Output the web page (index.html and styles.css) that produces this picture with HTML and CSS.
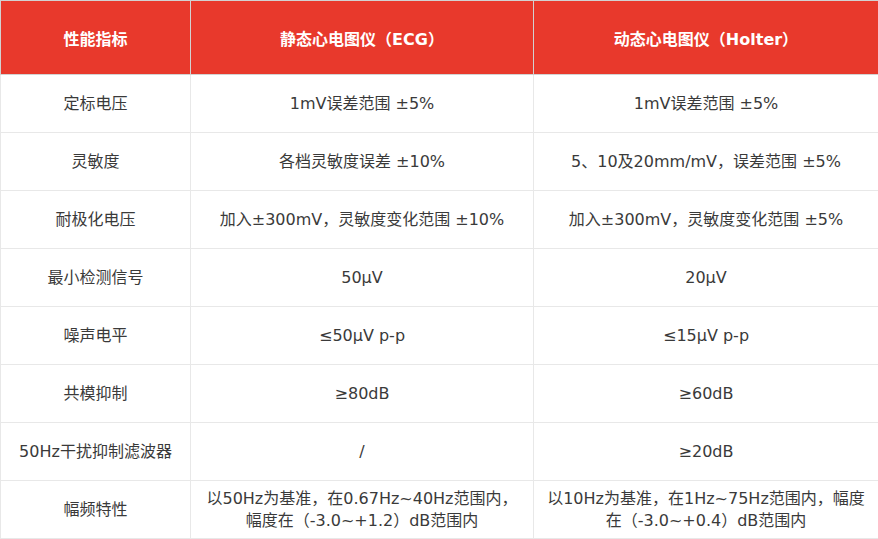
FILE: index.html
```html
<!DOCTYPE html>
<html lang="zh">
<head>
<meta charset="utf-8">
<link rel="stylesheet" href="styles.css">
</head>
<body>
<table class="spec">
  <colgroup>
    <col class="c1"><col class="c2"><col class="c3">
  </colgroup>
  <thead>
    <tr>
      <th>性能指标</th>
      <th>静态心电图仪（ECG）</th>
      <th>动态心电图仪（Holter）</th>
    </tr>
  </thead>
  <tbody>
    <tr><td>定标电压</td><td>1mV误差范围 ±5%</td><td>1mV误差范围 ±5%</td></tr>
    <tr><td>灵敏度</td><td>各档灵敏度误差 ±10%</td><td>5、10及20mm/mV，误差范围 ±5%</td></tr>
    <tr><td>耐极化电压</td><td>加入±300mV，灵敏度变化范围 ±10%</td><td>加入±300mV，灵敏度变化范围 ±5%</td></tr>
    <tr><td>最小检测信号</td><td>50μV</td><td>20μV</td></tr>
    <tr><td>噪声电平</td><td>≤50μV p-p</td><td>≤15μV p-p</td></tr>
    <tr><td>共模抑制</td><td>≥80dB</td><td>≥60dB</td></tr>
    <tr><td>50Hz干扰抑制滤波器</td><td>/</td><td>≥20dB</td></tr>
    <tr><td>幅频特性</td><td>以50Hz为基准，在0.67Hz~40Hz范围内，幅度在（-3.0~+1.2）dB范围内</td><td>以10Hz为基准，在1Hz~75Hz范围内，幅度在（-3.0~+0.4）dB范围内</td></tr>
  </tbody>
</table>
</body>
</html>
```
FILE: styles.css
```css
html, body {
  margin: 0;
  padding: 0;
  background: #ffffff;
}
body {
  font-family: "DejaVu Sans", "Noto Sans CJK SC", sans-serif;
  font-size: 16px;
  color: #3a3a3a;
}
.spec {
  width: 878px;
  border-collapse: collapse;
  table-layout: fixed;
}
.c1 { width: 190px; }
.c2 { width: 343px; }
.c3 { width: 345px; }
.spec th {
  background: #e8392c;
  color: #ffffff;
  font-weight: bold;
  height: 73px;
  padding: 0;
  border: 1px solid #d2d2d2;
  text-align: center;
  vertical-align: middle;
}
.spec thead th + th {
  border-left-color: #e2e2e2;
}
.spec td {
  height: 57px;
  padding: 0 12px;
  border: 1px solid #e8e8e8;
  text-align: center;
  vertical-align: middle;
  line-height: 22px;
}
```
